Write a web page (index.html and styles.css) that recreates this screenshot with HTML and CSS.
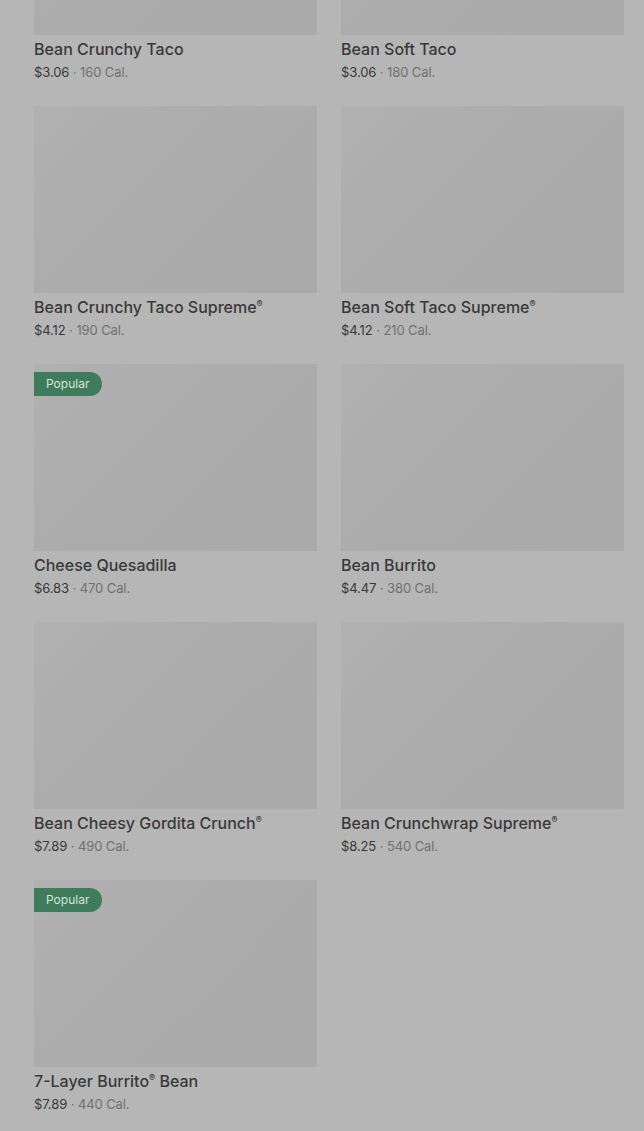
FILE: index.html
```html
<!DOCTYPE html>
<html lang="en">
<head>
    <meta charset="UTF-8">
    <title>Menu</title>
    <meta name="viewport" content="width=device-width, initial-scale=1.0">
    <link rel="stylesheet" href="styles.css">
</head>
<body>
    <div class="menu-grid">
        <div class="item">
            <div class="thumb"></div>
            <h3>Bean Crunchy Taco</h3>
            <p class="meta"><span class="price">$3.06</span> · 160 Cal.</p>
        </div>
        <div class="item">
            <div class="thumb"></div>
            <h3>Bean Soft Taco</h3>
            <p class="meta"><span class="price">$3.06</span> · 180 Cal.</p>
        </div>
        <div class="item">
            <div class="thumb"></div>
            <h3>Bean Crunchy Taco Supreme<sup>®</sup></h3>
            <p class="meta"><span class="price">$4.12</span> · 190 Cal.</p>
        </div>
        <div class="item">
            <div class="thumb"></div>
            <h3>Bean Soft Taco Supreme<sup>®</sup></h3>
            <p class="meta"><span class="price">$4.12</span> · 210 Cal.</p>
        </div>
        <div class="item">
            <div class="thumb"><span class="badge">Popular</span></div>
            <h3>Cheese Quesadilla</h3>
            <p class="meta"><span class="price">$6.83</span> · 470 Cal.</p>
        </div>
        <div class="item">
            <div class="thumb"></div>
            <h3>Bean Burrito</h3>
            <p class="meta"><span class="price">$4.47</span> · 380 Cal.</p>
        </div>
        <div class="item">
            <div class="thumb"></div>
            <h3>Bean Cheesy Gordita Crunch<sup>®</sup></h3>
            <p class="meta"><span class="price">$7.89</span> · 490 Cal.</p>
        </div>
        <div class="item">
            <div class="thumb"></div>
            <h3>Bean Crunchwrap Supreme<sup>®</sup></h3>
            <p class="meta"><span class="price">$8.25</span> · 540 Cal.</p>
        </div>
        <div class="item">
            <div class="thumb"><span class="badge">Popular</span></div>
            <h3>7-Layer Burrito<sup>®</sup> Bean</h3>
            <p class="meta"><span class="price">$7.89</span> · 440 Cal.</p>
        </div>
    </div>
</body>
</html>
```
FILE: styles.css
```css
* {
    box-sizing: border-box;
    margin: 0;
    padding: 0;
}

html, body {
    background: #b6b6b6;
    font-family: Inter, "Noto Sans", sans-serif;
    color: #3a3a3a;
    overflow: hidden;
}

.menu-grid {
    display: grid;
    grid-template-columns: 283px 283px;
    column-gap: 24px;
    row-gap: 24px;
    padding: 0 20px 0 34px;
    margin-top: -152px;
}

.thumb {
    position: relative;
    height: 187px;
    background: linear-gradient(135deg, #b1b1b1 0%, #acacac 40%, #aaaaaa 100%);
}

.badge {
    position: absolute;
    top: 8px;
    left: 0;
    height: 24px;
    padding: 0 13px 0 12px;
    line-height: 24px;
    font-size: 12px;
    color: #d6e4da;
    background: #3f7c5c;
    border-radius: 0 12px 12px 0;
}

.item h3 {
    margin-top: 4px;
    font-size: 16px;
    line-height: 20px;
    font-weight: 500;
    color: #393939;
}

.item sup {
    font-size: 9px;
    vertical-align: 6px;
    line-height: 0;
}

.meta {
    margin-top: 3px;
    font-size: 13px;
    line-height: 20px;
    letter-spacing: -0.1px;
    color: #717171;
}

.price {
    color: #393939;
}
```
